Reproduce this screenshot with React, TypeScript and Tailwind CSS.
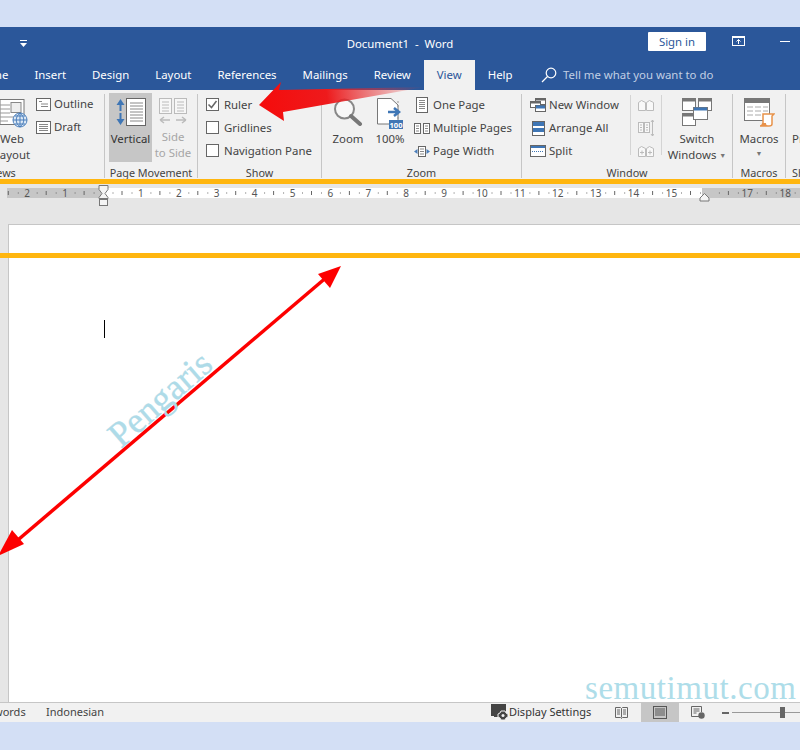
import React from 'react';

const tabs = ['Home', 'Insert', 'Design', 'Layout', 'References', 'Mailings', 'Review', 'View', 'Help'];
const rulerNumbers = [-2, -1, 1, 2, 3, 4, 5, 6, 7, 8, 9, 10, 11, 12, 13, 14, 15, 17, 18];

const Row: React.FC<{ icon: React.ReactNode; label: string; iconWidth?: string }> = ({ icon, label, iconWidth = 'w-[16px]' }) => (
    <div className="flex items-center shrink-0 h-[20px] gap-[3px] whitespace-nowrap">
        <div className={`${iconWidth} flex justify-center`}>{icon}</div>
        <span>{label}</span>
    </div>
);

const Group: React.FC<{ label: string; className: string; labelClass?: string; children: React.ReactNode }> = ({ label, className, labelClass = 'text-center', children }) => (
    <div className={`flex flex-col shrink-0 border-r border-[#c6c6c6] ${className}`}>
        <div className="flex-1 flex min-h-0">{children}</div>
        <div className={`h-[11px] leading-[11px] text-[10.8px] text-[#444] whitespace-nowrap ${labelClass}`}>{label}</div>
    </div>
);

const Box: React.FC<{ checked?: boolean }> = ({ checked }) => (
    <svg className="-mt-[2px]" width="13" height="13" viewBox="0 0 13 13" fill="none">
        <rect x="0.5" y="0.5" width="12" height="12" fill="#fff" stroke="#666" />
        {checked && <path d="M2.500 6.500l3 3 5-6.500" stroke="#666" strokeWidth="1.5" />}
    </svg>
);

const DocIcon = () => (
    <svg width="15" height="13" viewBox="0 0 15 13" fill="none" stroke="#666">
        <rect x="0.5" y="0.5" width="14" height="12" fill="#fff" />
        <path d="M3 3.5h3M5 6h7M5 8.5h7" stroke="#888" />
    </svg>
);

const DraftIcon = () => (
    <svg width="15" height="13" viewBox="0 0 15 13" fill="none" stroke="#666">
        <rect x="0.5" y="0.5" width="14" height="12" fill="#fff" />
        <path d="M3 3.5h9M3 5.5h9M3 7.5h9M3 9.5h9" stroke="#888" />
    </svg>
);

const OnePageIcon = () => (
    <svg width="12" height="16" viewBox="0 0 12 16" fill="none" stroke="#666">
        <rect x="0.5" y="0.5" width="11" height="15" fill="#fff" />
        <path d="M3 3.5h6M3 5.5h6M3 7.5h6M3 9.5h6M3 11.5h6" stroke="#888" />
    </svg>
);

const MultiPageIcon = () => (
    <svg width="16" height="11" viewBox="0 0 16 11" fill="none" stroke="#666">
        <rect x="0.5" y="0.5" width="6" height="10" fill="#fff" />
        <rect x="9.5" y="0.5" width="6" height="10" fill="#fff" />
        <path d="M2 3h3M2 5.500h3M2 8h3M11 3h3M11 5.500h3M11 8h3" stroke="#888" />
    </svg>
);

const PageWidthIcon = () => (
    <svg width="16" height="11" viewBox="0 0 16 11" fill="none">
        <rect x="4.500" y="0.500" width="7" height="10" fill="#fff" stroke="#666" />
        <path d="M6 3h4M6 5.500h4M6 8h4" stroke="#888" />
        <path d="M3.500 3v5L0 5.500zM12.500 3v5L16 5.500z" fill="#4a7ebb" />
    </svg>
);

const NewWindowIcon = () => (
    <svg width="16" height="14" viewBox="0 0 16 14" fill="none" stroke="#666">
        <rect x="5.500" y="0.500" width="10" height="6" fill="#fff" />
        <path d="M6 1.500h9" stroke="#666" strokeWidth="2" />
        <rect x="0.500" y="3.500" width="10" height="6" fill="#fff" />
        <path d="M1 4.500h9" stroke="#666" strokeWidth="2" />
        <rect x="5.500" y="7.500" width="10" height="6" fill="#fff" />
        <path d="M6 9h9" stroke="#3f76b5" strokeWidth="3" />
    </svg>
);

const ArrangeIcon = () => (
    <svg width="13" height="15" viewBox="0 0 13 15" fill="none" stroke="#666">
        <rect x="0.500" y="0.500" width="12" height="14" fill="#fff" />
        <rect x="1" y="1" width="11" height="4" fill="#3f76b5" stroke="none" />
        <rect x="1" y="7" width="11" height="4" fill="#3f76b5" stroke="none" />
    </svg>
);

const SplitIcon = () => (
    <svg width="16" height="12" viewBox="0 0 16 12" fill="none" stroke="#666">
        <rect x="0.500" y="0.500" width="15" height="11" fill="#fff" />
        <rect x="1" y="1" width="14" height="2" fill="#3f76b5" stroke="none" />
        <path d="M2 6.500h12" stroke="#3f76b5" strokeDasharray="1 1" />
    </svg>
);

const SideBySideIcon = ({ kind }: { kind: number }) => (
    <svg width="16" height={kind === 1 ? 18 : 11} viewBox={kind === 1 ? '0 0 16 18' : '0 0 16 11'} fill="none" stroke="#bbb">
        {kind === 1 ? (
            <>
                <rect x="0.500" y="3.500" width="5" height="10" fill="#f8f8f8" />
                <rect x="6.500" y="3.500" width="5" height="10" fill="#f8f8f8" />
                <path d="M2 6h2M2 8.500h2M2 11h2M8 6h2M8 8.500h2M8 11h2" />
                <path d="M14.500 1v16M13 3l1.500-2 1.500 2M13 15l1.500 2 1.500-2" />
            </>
        ) : (
            <>
                <path d="M0.500 2.500l3-2 4 2v8h-7zM8.500 2.500l3-2 4 2v8h-7z" fill="#f8f8f8" />
                {kind === 2 && <path d="M2 6.500h4M4 4.500v4M10 6.500h4M12 4.500v4" />}
            </>
        )}
    </svg>
);

const RedArrows = () => (
    <svg className="absolute left-0 top-0 pointer-events-none" width="800" height="750" viewBox="0 0 800 750" fill="none">
        <defs>
            <linearGradient id="bigArrow" gradientUnits="userSpaceOnUse" x1="262" y1="108" x2="425" y2="86">
                <stop offset="0%" stopColor="#f50c0c" />
                <stop offset="40%" stopColor="#ee1a1c" />
                <stop offset="100%" stopColor="#e03a3e" stopOpacity="0" />
            </linearGradient>
        </defs>
        <path d="M259 105L281 82L279 90L425 87L283 112L284 121Z" fill="url(#bigArrow)" />
        <path d="M12 545L328 276" stroke="#fd0000" strokeWidth="3.500" />
        <path d="M341 266L318 274L330 288Z" fill="#fd0000" />
        <path d="M-2 556L24 544L12 530Z" fill="#fd0000" />
    </svg>
);

export default function App() {
    return (
        <div className="relative w-[800px] h-[750px] overflow-hidden bg-[#d3dff5] pt-[27px] text-[11.4px] text-[#444]" style={{ fontFamily: '"Noto Sans", sans-serif' }}>
            <div className="flex flex-col h-[695px]">
                {/* Title bar */}
                <div className="relative h-[33px] shrink-0 bg-[#2b579a] text-white flex items-center">
                    <svg className="ml-[20px]" width="7" height="8" viewBox="0 0 7 8" fill="#fff">
                        <path d="M0 0h7v1H0zM0 3h7L3.500 7z" />
                    </svg>
                    <div className="absolute inset-x-0 text-center top-[8px]">Document1&nbsp; -&nbsp; Word</div>
                    <div className="ml-[621px] -mt-[4px] w-[58px] h-[19px] bg-white rounded-[1px] text-[#2b579a] text-center leading-[19px]">Sign in</div>
                    <svg className="ml-[26px] -mt-[5px]" width="13" height="10" viewBox="0 0 13 10" fill="none" stroke="#fff">
                        <rect x="0.500" y="0.500" width="12" height="9" />
                        <path d="M1 1.500h11M6.500 8V3.500M4.500 5.500l2-2 2 2" />
                    </svg>
                    <div className="ml-[35px] -mt-[5px] w-[10px] h-[1px] bg-white" />
                </div>

                {/* Tabs */}
                <div className="h-[30px] shrink-0 bg-[#2b579a] text-white flex items-stretch">
                    <div className="flex -ml-[37px] w-[578px] shrink-0">
                        {tabs.map(tab => (
                            <div key={tab} className={`px-[13px] leading-[30px] whitespace-nowrap ${tab === 'View' ? 'bg-[#f1f1f1] text-[#2b579a]' : ''}`}>{tab}</div>
                        ))}
                    </div>
                    <svg className="mt-[7px]" width="16" height="16" viewBox="0 0 16 16" fill="none" stroke="#fff" strokeWidth="1.200">
                        <circle cx="10" cy="6" r="4.800" />
                        <path d="M6.500 9.500L1 15" />
                    </svg>
                    <div className="ml-[6px] leading-[30px] text-[#c1cfe4] whitespace-nowrap">Tell me what you want to do</div>
                </div>

                {/* Ribbon */}
                <div className="h-[89px] shrink-0 bg-[#f1f1f1] flex overflow-hidden pt-[4px] pb-[1px] text-[#444]">
                    <Group label="Views" className="w-[105px]" labelClass="-ml-[13px]">
                        <div className="w-[35px] shrink-0 relative flex flex-col items-center">
                            <svg className="-ml-[8px] mt-[5px]" width="28" height="30" viewBox="0 0 28 30" fill="none">
                                <rect x="0" y="0.500" width="24" height="25" fill="#fff" stroke="#777" />
                                <path d="M0 6h10M0 10h10M0 14h10M0 18h14M0 22h8" stroke="#999" />
                                <rect x="11" y="3.500" width="10" height="10" fill="#eee" stroke="#888" />
                                <circle cx="20" cy="21" r="7" fill="#dce8f5" stroke="#4a7ebb" />
                                <path d="M13 21h14M20 14v14M15 17h10M15 25h10M20 14c-5 4-5 10 0 14M20 14c5 4 5 10 0 14" stroke="#4a7ebb" />
                            </svg>
                            <div className="absolute top-[37px] -left-[18px] w-[60px] text-center leading-[16px] whitespace-nowrap">Web<br />Layout</div>
                        </div>
                        <div className="flex flex-col gap-[3px]">
                            <Row icon={<DocIcon />} label="Outline" />
                            <Row icon={<DraftIcon />} label="Draft" />
                        </div>
                    </Group>

                    <Group label="Page Movement" className="w-[93px]">
                        <div className="ml-[4px] -mt-[1px] w-[43px] h-[69px] bg-[#c6c6c6] flex flex-col items-center">
                            <svg className="mt-[5px]" width="30" height="28" viewBox="0 0 30 28" fill="none">
                                <rect x="10.500" y="0.500" width="19" height="27" fill="#fff" stroke="#666" />
                                <path d="M14 5h13M14 8h13M14 11h13M14 14h13M14 17h13M14 20h13M14 23h13" stroke="#888" />
                                <path d="M4.500 1L0.500 7h3v6h2V7h3zM4.500 27l-4-6h3v-6h2v6h3z" fill="#3f76b5" />
                            </svg>
                            <div className="mt-[5px] leading-[16px] text-[#333]">Vertical</div>
                        </div>
                        <div className="ml-[3px] w-[36px] flex flex-col items-center text-[#a6a6a6]">
                            <svg className="mt-[4px]" width="28" height="27" viewBox="0 0 28 27" fill="none" stroke="#bbb">
                                <rect x="0.500" y="0.500" width="12" height="15" fill="#f7f7f7" />
                                <rect x="15.500" y="0.500" width="12" height="15" fill="#f7f7f7" />
                                <path d="M3 4h7M3 7h7M3 10h7M3 13h7M18 4h7M18 7h7M18 10h7M18 13h7" />
                                <path d="M1 22h10M1 22l4-3M1 22l4 3M17 22h10M27 22l-4-3M27 22l-4 3" strokeWidth="1.500" />
                            </svg>
                            <div className="mt-[4px] text-center leading-[16px] whitespace-nowrap">Side<br />to Side</div>
                        </div>
                    </Group>

                    <Group label="Show" className="w-[124px]">
                        <div className="ml-[8px] mt-[1px] flex flex-col gap-[3px] whitespace-nowrap">
                            <div className="flex items-center shrink-0 h-[20px] gap-[3px]"><div className="w-[14px] mr-[1px] flex items-center"><Box checked /></div>Ruler</div>
                            <div className="flex items-center shrink-0 h-[20px] gap-[3px]"><div className="w-[14px] mr-[1px] flex items-center"><Box /></div>Gridlines</div>
                            <div className="flex items-center shrink-0 h-[20px] gap-[3px]"><div className="w-[14px] mr-[1px] flex items-center"><Box /></div>Navigation Pane</div>
                        </div>
                    </Group>

                    <Group label="Zoom" className="w-[200px]">
                        <div className="ml-[8px] w-[36px] flex flex-col items-center">
                            <svg className="mt-[4px]" width="30" height="28" viewBox="0 0 30 28" fill="none">
                                <circle cx="11.500" cy="11" r="9.500" fill="#f8f8f8" stroke="#888" strokeWidth="2" />
                                <path d="M18 18l9 8" stroke="#777" strokeWidth="4" strokeLinecap="round" />
                            </svg>
                            <div className="mt-[5px] leading-[16px]">Zoom</div>
                        </div>
                        <div className="ml-[6px] w-[36px] flex flex-col items-center">
                            <svg className="mt-[4px]" width="28" height="32" viewBox="0 0 28 32" fill="none">
                                <path d="M1.500 0.500H15L22 7v19H1.500z" fill="#fff" stroke="#777" />
                                <path d="M22 3v20" stroke="#999" strokeDasharray="2 2" />
                                <path d="M12 14h10M18 10l5 4-5 4" stroke="#3f76b5" strokeWidth="2.500" />
                                <rect x="13" y="22" width="14" height="9" fill="#3f76b5" />
                                <text x="20" y="29.500" textAnchor="middle" fontSize="7.500" fontWeight="700" fill="#fff">100</text>
                            </svg>
                            <div className="mt-[1px] leading-[16px]">100%</div>
                        </div>
                        <div className="ml-[6px] mt-[1px] flex flex-col gap-[3px]">
                            <Row icon={<OnePageIcon />} label="One Page" />
                            <Row icon={<MultiPageIcon />} label="Multiple Pages" />
                            <Row icon={<PageWidthIcon />} label="Page Width" />
                        </div>
                    </Group>

                    <Group label="Window" className="w-[211px]">
                        <div className="ml-[8px] mt-[1px] w-[101px] border-r border-[#d4d4d4] mb-[12px] flex flex-col gap-[3px]">
                            <Row icon={<NewWindowIcon />} label="New Window" />
                            <Row icon={<ArrangeIcon />} label="Arrange All" />
                            <Row icon={<SplitIcon />} label="Split" />
                        </div>
                        <div className="w-[31px] mt-[1px] border-r border-[#d4d4d4] mb-[12px] flex flex-col gap-[3px] items-center">
                            <div className="h-[20px] shrink-0 flex items-center"><SideBySideIcon kind={0} /></div>
                            <div className="h-[20px] shrink-0 flex items-center"><SideBySideIcon kind={1} /></div>
                            <div className="h-[20px] shrink-0 flex items-center"><SideBySideIcon kind={2} /></div>
                        </div>
                        <div className="w-[70px] flex flex-col items-center">
                            <svg className="mt-[4px]" width="30" height="28" viewBox="0 0 30 28" fill="none" stroke="#777">
                                <rect x="0.500" y="0.500" width="13" height="12" fill="#fff" />
                                <path d="M1 2h12" strokeWidth="3" />
                                <rect x="16.500" y="0.500" width="13" height="12" fill="#fff" />
                                <path d="M17 2h12" strokeWidth="3" />
                                <rect x="0.500" y="15.500" width="13" height="12" fill="#fff" />
                                <path d="M1 17h12" strokeWidth="3" />
                                <rect x="11.500" y="9.500" width="14" height="12" fill="#fff" />
                                <path d="M12 11h13" stroke="#3f76b5" strokeWidth="3" />
                            </svg>
                            <div className="mt-[5px] text-center leading-[16px] whitespace-nowrap">Switch<br />Windows <span className="text-[7px] align-middle text-[#777]">▼</span></div>
                        </div>
                    </Group>

                    <Group label="Macros" className="w-[53px]">
                        <div className="w-full flex flex-col items-center">
                            <svg className="mt-[4px]" width="31" height="29" viewBox="0 0 31 29" fill="none">
                                <rect x="0.500" y="0.500" width="25" height="22" fill="#fff" stroke="#777" />
                                <rect x="0" y="0" width="26" height="5" fill="#777" />
                                <path d="M3 9h6M11 9h6M19 9h5M3 13h6M11 13h6M19 13h5M3 17h6M11 17h6" stroke="#aaa" />
                                <path d="M19 16h11l-2 2v8c0 2-2 2-3 2h-9c2 0 3-1 3-3z" fill="#fff" stroke="#e8924a" strokeWidth="1.500" />
                                <path d="M16 28h8c-2-1-2-2-2-3h-4c0 1-1 3-2 3z" fill="#e8924a" />
                            </svg>
                            <div className="mt-[4px] leading-[16px]">Macros</div>
                            <span className="text-[7px] leading-[14px] text-[#777]">▼</span>
                        </div>
                    </Group>

                    <div className="flex flex-col pl-[6px] whitespace-nowrap">
                        <div className="flex-1 pt-[37px] leading-[16px]">Properties</div>
                        <div className="h-[11px] leading-[11px] text-[10.800px]">SharePoint</div>
                    </div>
                </div>

                <div className="h-[5px] shrink-0 bg-[#ffb60f]" />

                {/* Ruler */}
                <div className="h-[40px] shrink-0 bg-[#e6e6e6]">
                    <svg width="800" height="24" viewBox="0 0 800 24" fill="none">
                        <rect x="7" y="4" width="97" height="10" fill="#c6c6c6" />
                        <rect x="104" y="4" width="598" height="10" fill="#fff" />
                        <rect x="702" y="4" width="98" height="10" fill="#c6c6c6" />
                        {Array.from({ length: 28 }, (_, i) => i - 3).map(n => {
                            const x = 103 + n * 37.9;
                            return (
                                <g key={n} stroke="#666">
                                    <path d={`M${x + 9.500} 9h1`} />
                                    <path d={`M${x + 19} 7v4`} />
                                    <path d={`M${x + 28.500} 9h1`} />
                                </g>
                            );
                        })}
                        {rulerNumbers.map(n => (
                            <text key={n} x={103 + n * 37.9} y="13" textAnchor="middle" fontSize="10" fill="#555">{Math.abs(n)}</text>
                        ))}
                        <path d="M99 1.500h9v4l-3 4 3 4v1h-9v-1l3-4-3-4z" fill="#f4f4f4" stroke="#777" />
                        <rect x="99.500" y="15.500" width="8" height="6" fill="#f4f4f4" stroke="#777" />
                        <path d="M704.500 9.500l4.500 4.500v3h-9v-3z" fill="#f4f4f4" stroke="#777" />
                    </svg>
                </div>

                {/* Document */}
                <div className="flex-1 min-h-0 flex bg-[#e6e6e6]">
                    <div className="w-[9px] shrink-0 border-r border-[#c6c6c6]" />
                    <div className="flex-1 bg-white border-t border-[#c6c6c6] pl-[95px] pt-[95px]">
                        <div className="w-px h-[18px] bg-black" />
                    </div>
                </div>

                {/* Status bar */}
                <div className="h-[20px] shrink-0 bg-[#f1f1f1] border-t border-[#c6c6c6] flex items-center text-[11px] text-[#444] whitespace-nowrap">
                    <span className="-ml-[6px] w-[52px] shrink-0">words</span>
                    <span className="w-[445px] shrink-0">Indonesian</span>
                    <svg className="shrink-0" width="18" height="17" viewBox="0 0 18 17" fill="#444">
                        <path d="M0 0h15v10H9v3H3v-1H0z" />
                        <path d="M10 7h4l1 2 2 1v3l-2 1-1 2h-4l-1-2-2-1v-3l2-1z" stroke="#f1f1f1" />
                        <circle cx="12" cy="11.500" r="1.500" fill="#f1f1f1" />
                    </svg>
                    <span className="w-[106px] shrink-0 text-[#333]">Display Settings</span>
                    <svg className="shrink-0" width="13" height="12" viewBox="0 0 13 12" fill="none" stroke="#666">
                        <path d="M0.500 0.500h5l1 1 1-1h5v10h-5l-1 1-1-1h-5zM6.500 1.500v9M2 3h3M2 5h3M2 7h3M8 3h3M8 5h3M8 7h3" />
                    </svg>
                    <div className="ml-[13px] w-[38px] shrink-0 h-full bg-[#c6c6c6] flex items-center justify-center">
                        <svg width="14" height="13" viewBox="0 0 14 13" fill="none" stroke="#555">
                            <rect x="0.500" y="0.500" width="13" height="12" />
                            <path d="M2 3h10M2 5h10M2 7h10M2 9h10" />
                        </svg>
                    </div>
                    <svg className="ml-[12px] shrink-0" width="14" height="13" viewBox="0 0 14 13" fill="none" stroke="#666">
                        <path d="M9 10.500H0.500V0.500h10V6M2.500 3h6M2.500 5h6M2.500 7h3" />
                        <circle cx="10.500" cy="9.500" r="3.200" fill="#666" stroke="none" />
                    </svg>
                    <div className="ml-[17px] w-[7px] shrink-0 h-[2px] bg-[#666]" />
                    <div className="ml-[3px] relative w-[70px] shrink-0 h-[1px] bg-[#999]">
                        <div className="absolute left-[48px] -top-[5px] w-[5px] h-[11px] bg-[#666]" />
                    </div>
                </div>
            </div>

            {/* Annotation layer over the screenshot */}
            <div className="absolute left-0 right-0 top-[253px] h-[5px] bg-[#ffb60f]" />
            <RedArrows />
            <div className="absolute left-[80px] top-[381px] w-[160px] text-center text-[36px] leading-[36px] text-[#aedbe8] [-webkit-text-stroke:0.4px_#aedbe8] -rotate-[41deg] whitespace-nowrap" style={{ fontFamily: '"Liberation Serif", serif' }}>Pengaris</div>
            <div className="absolute left-[585px] top-[670px] text-[33px] leading-[36px] tracking-[0.55px] text-[#aedde9] whitespace-nowrap" style={{ fontFamily: '"Liberation Serif", serif' }}>semutimut.com</div>
        </div>
    );
}
